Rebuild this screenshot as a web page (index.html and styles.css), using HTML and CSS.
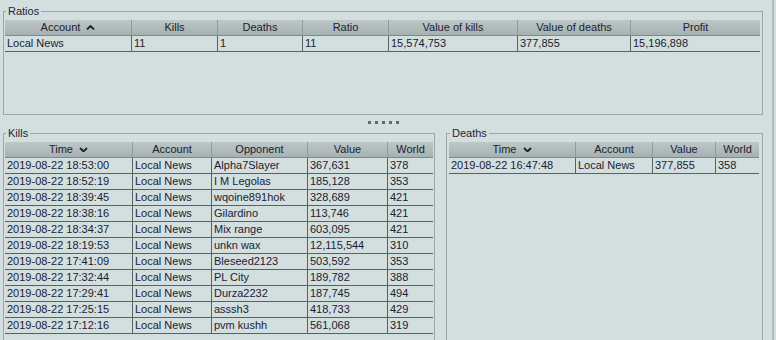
FILE: index.html
```html
<!DOCTYPE html>
<html lang="en">
<head>
  <meta charset="UTF-8" />
  <title>Kill log</title>
  <link rel="stylesheet" href="styles.css">
</head>
<body>
  <div class="app">

    <fieldset class="group ratios">
      <legend>Ratios</legend>
      <table class="grid ratios-table">
        <colgroup>
          <col class="w127"><col class="w86"><col class="w85"><col class="w86"><col class="w129"><col class="w113"><col class="w129">
        </colgroup>
        <thead>
          <tr>
            <th>Account <svg class="sort" width="9" height="5" viewBox="0 0 9 5"><polyline points="1,4.5 4.5,1 8,4.5" /></svg></th>
            <th>Kills</th>
            <th>Deaths</th>
            <th>Ratio</th>
            <th>Value of kills</th>
            <th>Value of deaths</th>
            <th>Profit</th>
          </tr>
        </thead>
        <tbody>
          <tr>
            <td>Local News</td>
            <td>11</td>
            <td>1</td>
            <td>11</td>
            <td>15,574,753</td>
            <td>377,855</td>
            <td>15,196,898</td>
          </tr>
        </tbody>
      </table>
    </fieldset>

    <div class="splitter">
      <span class="dot"></span><span class="dot"></span><span class="dot"></span><span class="dot"></span><span class="dot"></span>
    </div>

    <div class="bottom">
      <fieldset class="group kills">
        <legend>Kills</legend>
        <table class="grid kills-table">
          <colgroup>
            <col class="w128"><col class="w79"><col class="w96"><col class="w80"><col class="w45">
          </colgroup>
          <thead>
            <tr>
              <th>Time <svg class="sort" width="9" height="5" viewBox="0 0 9 5"><polyline points="1,1 4.5,4.5 8,1" /></svg></th>
              <th>Account</th>
              <th>Opponent</th>
              <th>Value</th>
              <th>World</th>
            </tr>
          </thead>
          <tbody>
            <tr><td>2019-08-22 18:53:00</td><td>Local News</td><td>Alpha7Slayer</td><td>367,631</td><td>378</td></tr>
            <tr><td>2019-08-22 18:52:19</td><td>Local News</td><td>I M Legolas</td><td>185,128</td><td>353</td></tr>
            <tr><td>2019-08-22 18:39:45</td><td>Local News</td><td>wqoine891hok</td><td>328,689</td><td>421</td></tr>
            <tr><td>2019-08-22 18:38:16</td><td>Local News</td><td>Gilardino</td><td>113,746</td><td>421</td></tr>
            <tr><td>2019-08-22 18:34:37</td><td>Local News</td><td>Mix range</td><td>603,095</td><td>421</td></tr>
            <tr><td>2019-08-22 18:19:53</td><td>Local News</td><td>unkn wax</td><td>12,115,544</td><td>310</td></tr>
            <tr><td>2019-08-22 17:41:09</td><td>Local News</td><td>Bleseed2123</td><td>503,592</td><td>353</td></tr>
            <tr><td>2019-08-22 17:32:44</td><td>Local News</td><td>PL City</td><td>189,782</td><td>388</td></tr>
            <tr><td>2019-08-22 17:29:41</td><td>Local News</td><td>Durza2232</td><td>187,745</td><td>494</td></tr>
            <tr><td>2019-08-22 17:25:15</td><td>Local News</td><td>asssh3</td><td>418,733</td><td>429</td></tr>
            <tr><td>2019-08-22 17:12:16</td><td>Local News</td><td>pvm kushh</td><td>561,068</td><td>319</td></tr>
          </tbody>
        </table>
      </fieldset>

      <fieldset class="group deaths">
        <legend>Deaths</legend>
        <table class="grid deaths-table">
          <colgroup>
            <col class="w127"><col class="w77"><col class="w63"><col class="w43">
          </colgroup>
          <thead>
            <tr>
              <th>Time <svg class="sort" width="9" height="5" viewBox="0 0 9 5"><polyline points="1,1 4.5,4.5 8,1" /></svg></th>
              <th>Account</th>
              <th>Value</th>
              <th>World</th>
            </tr>
          </thead>
          <tbody>
            <tr><td>2019-08-22 16:47:48</td><td>Local News</td><td>377,855</td><td>358</td></tr>
          </tbody>
        </table>
      </fieldset>
    </div>

  </div>
</body>
</html>
```

FILE: styles.css
```css
body {
  margin: 0;
  height: 340px;
  overflow: hidden;
  background-color: #d3dfdf;
  font-family: "Liberation Sans", Arial, sans-serif;
  font-size: 11px;
  color: #1b2130;
}

.app {
  width: 774px;
  height: 340px;
  padding-left: 3px;
  box-sizing: border-box;
  border-right: 2px solid #aebbbb;
  overflow: hidden;
}

.group {
  margin: 0;
  padding: 2px 1px 0;
  border: 1px solid #9ba7a7;
  box-sizing: border-box;
  min-width: 0;
}

.group legend {
  margin-left: 1px;
  padding: 0 2px;
  line-height: 14px;
  color: #1d2636;
}

.ratios {
  margin-top: 4px;
  width: 760px;
  height: 111px;
}

.splitter {
  width: 760px;
  height: 11px;
  display: flex;
  justify-content: center;
  align-items: flex-start;
  gap: 4px;
  padding-top: 6px;
  box-sizing: border-box;
}

.dot {
  width: 3px;
  height: 3px;
  background-color: #606b6b;
}

.bottom {
  display: flex;
  gap: 11px;
  height: 214px;
  overflow: hidden;
}

.kills {
  width: 432px;
  height: 230px;
}

.deaths {
  width: 317px;
  height: 230px;
  padding-left: 2px;
}

/* tables */
.grid {
  border-collapse: separate;
  border-spacing: 0;
  table-layout: fixed;
}

.ratios-table { width: 755px; }
.kills-table { width: 428px; }
.deaths-table { width: 310px; }

.w43 { width: 43px; }
.w45 { width: 45px; }
.w63 { width: 63px; }
.w77 { width: 77px; }
.w79 { width: 79px; }
.w80 { width: 80px; }
.w85 { width: 85px; }
.w86 { width: 86px; }
.w96 { width: 96px; }
.w113 { width: 113px; }
.w127 { width: 127px; }
.w128 { width: 128px; }
.w129 { width: 129px; }

.grid th {
  height: 15px;
  padding: 0 2px;
  font-weight: normal;
  text-align: center;
  line-height: 15px;
  white-space: nowrap;
  overflow: hidden;
  background: linear-gradient(#bdc7c7, #a6b1b1);
  border-right: 1px solid #8f9b9b;
  border-bottom: 1px solid #7e8a8a;
}

.grid td {
  height: 15px;
  padding: 0 2px;
  line-height: 15px;
  white-space: nowrap;
  overflow: hidden;
  border-right: 1px solid #58625f;
  border-bottom: 1px solid #58625f;
}

.grid th:last-child,
.grid td:last-child {
  border-right: none;
}

.sort {
  margin-left: 3px;
  vertical-align: 1px;
}

.sort polyline {
  fill: none;
  stroke: #1b2130;
  stroke-width: 1.8;
}
```
